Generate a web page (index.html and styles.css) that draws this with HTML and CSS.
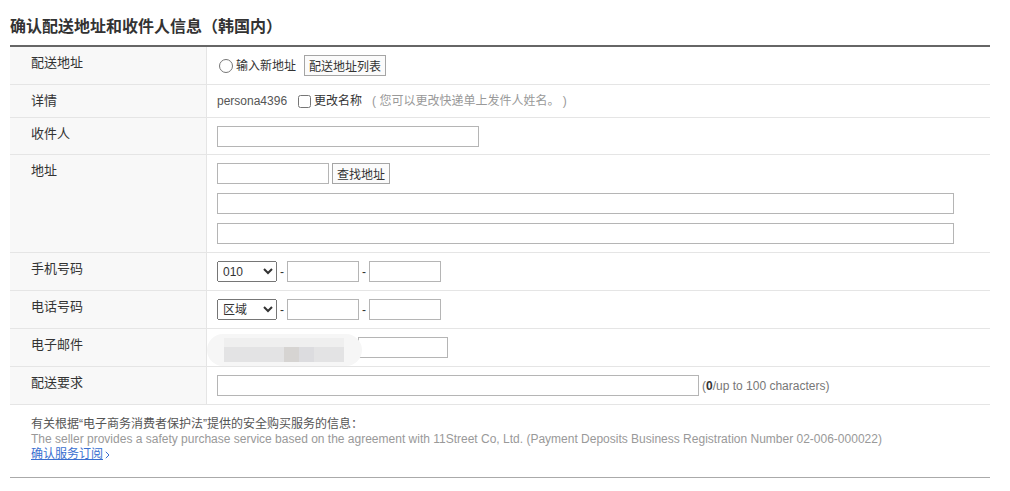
FILE: index.html
```html
<!DOCTYPE html>
<html lang="zh-CN">
<head>
<meta charset="utf-8">
<title>确认配送地址和收件人信息</title>
<link rel="stylesheet" href="styles.css">
</head>
<body>
<div class="page">
  <h2 class="title">确认配送地址和收件人信息（韩国内）</h2>
  <div class="form">
    <div class="row">
      <div class="label">配送地址</div>
      <div class="value inline">
        <label class="opt"><input type="radio" name="addr" class="radio"><span>输入新地址</span></label>
        <button type="button" class="btn list-btn">配送地址列表</button>
      </div>
    </div>
    <div class="row">
      <div class="label">详情</div>
      <div class="value inline">
        <span class="uid">persona4396</span>
        <label class="opt"><input type="checkbox" class="check"><span>更改名称</span></label>
        <span class="hint">( 您可以更改快递单上发件人姓名。 )</span>
      </div>
    </div>
    <div class="row">
      <div class="label">收件人</div>
      <div class="value inline tight">
        <input type="text" class="field w-name">
      </div>
    </div>
    <div class="row">
      <div class="label">地址</div>
      <div class="value stack">
        <div class="inline">
          <input type="text" class="field w-zip">
          <button type="button" class="btn find-btn">查找地址</button>
        </div>
        <input type="text" class="field w-addr">
        <input type="text" class="field w-addr">
      </div>
    </div>
    <div class="row">
      <div class="label">手机号码</div>
      <div class="value inline">
        <select class="sel"><option>010</option></select>
        <span class="dash">-</span>
        <input type="text" class="field w-tel">
        <span class="dash">-</span>
        <input type="text" class="field w-tel">
      </div>
    </div>
    <div class="row">
      <div class="label">电话号码</div>
      <div class="value inline">
        <select class="sel"><option>区域</option></select>
        <span class="dash">-</span>
        <input type="text" class="field w-tel">
        <span class="dash">-</span>
        <input type="text" class="field w-tel">
      </div>
    </div>
    <div class="row">
      <div class="label">电子邮件</div>
      <div class="value inline">
        <div class="mosaic">
          <div class="mrow top"><i></i><i></i><i></i><i></i><i></i><i></i><i></i><i></i></div>
          <div class="mrow bot"><i></i><i></i><i></i><i></i><i class="dk"></i><i class="md"></i><i></i><i></i></div>
        </div>
        <input type="text" class="field w-mail">
      </div>
    </div>
    <div class="row">
      <div class="label">配送要求</div>
      <div class="value inline">
        <input type="text" class="field w-req">
        <span class="count">(<b>0</b>/up to 100 characters)</span>
      </div>
    </div>
  </div>
  <div class="notice">
    <p class="n-title">有关根据“电子商务消费者保护法”提供的安全购买服务的信息：</p>
    <p class="n-text">The seller provides a safety purchase service based on the agreement with 11Street Co, Ltd. (Payment Deposits Business Registration Number 02-006-000022)</p>
    <p class="n-link"><a href="#">确认服务订阅</a><svg class="chev" width="5" height="8" viewBox="0 0 5 8"><path d="M0.8 0.8 L4 4 L0.8 7.2" fill="none" stroke="#3a6fd0" stroke-width="1"/></svg></p>
  </div>
</div>
</body>
</html>
```

FILE: styles.css
```css
* { box-sizing: border-box; }
html, body { margin: 0; padding: 0; background: #fff; }
body {
  font-family: "Liberation Sans", Arial, "Noto Sans CJK SC", sans-serif;
  font-size: 12px;
  color: #333;
}
.page {
  width: 980px;
  margin-left: 10px;
}
.title {
  margin: 0;
  padding-top: 17px;
  padding-bottom: 8px;
  font-size: 16px;
  line-height: 20px;
  font-weight: bold;
  color: #333;
  border-bottom: 2px solid #666;
}
.form { display: flex; flex-direction: column; }
.row {
  display: grid;
  grid-template-columns: 197px 1fr;
  border-bottom: 1px solid #e5e5e5;
}
.label {
  background: #f8f8f8;
  border-right: 1px solid #e5e5e5;
  padding: 8px 0 8px 21px;
  font-size: 13px;
  line-height: 16px;
  color: #333;
}
.value {
  padding: 8px 10px;
  line-height: 16px;
}
.value.tight { padding-bottom: 7px; }
.inline { display: flex; align-items: center; }
.stack { display: flex; flex-direction: column; gap: 9px; }
.opt { display: inline-flex; align-items: center; color: #333; }
.radio { width: 14px; height: 14px; margin: 0 3px 0 2px; }
.check { width: 13px; height: 13px; margin: 0 3px 0 0; }
.btn {
  height: 21px;
  padding: 0 4px;
  border: 1px solid #a5a5a5;
  background: #fbfbfb;
  font-family: inherit;
  font-size: 12px;
  color: #333;
  border-radius: 0;
}
.list-btn { margin-left: 8px; }
.find-btn { margin-left: 3px; }
.uid { color: #555; margin-right: 11px; }
.hint { color: #999; margin-left: 10px; }
.field {
  height: 21px;
  border: 1px solid #b5b5b5;
  padding: 0 4px;
  font-family: inherit;
  font-size: 12px;
  background: #fff;
  border-radius: 0;
}
.w-name { width: 262px; }
.w-zip { width: 112px; }
.w-addr { width: 737px; }
.w-tel { width: 72px; }
.w-mail { width: 90px; margin-left: -4px; }
.w-req { width: 482px; }
.sel {
  width: 60px;
  height: 21px;
  font-family: inherit;
  font-size: 12px;
  color: #333;
  padding: 0 0 0 1px;
}
.dash { color: #333; margin: 0 3px 0 3px; }
.count { color: #777; margin-left: 3px; }
.count b { color: #333; }
.mosaic {
  position: relative;
  z-index: 1;
  margin: -4px 0 -8px -10px;
  width: 155px;
  height: 32px;
  border-radius: 16px;
  background: #f6f6f6;
  padding: 4px 0 0 17px;
  display: flex;
  flex-direction: column;
}
.mrow { display: flex; }
.mrow i { display: block; width: 15px; }
.mrow.top i { height: 9px; background: #efefef; }
.mrow.bot i { height: 15px; background: #e3e3e4; }
.mrow.bot i.dk { background: #d6d4d2; }
.mrow.bot i.md { background: #dcdcdf; }
.notice {
  padding: 12px 21px 15px;
  border-bottom: 1px solid #aaa;
}
.notice p { margin: 0; line-height: 15px; }
.n-title { color: #555; }
.n-text { color: #999; }
.n-link a { color: #3a6fd0; text-decoration: underline; }
.chev { margin-left: 2px; vertical-align: -1px; }
```
